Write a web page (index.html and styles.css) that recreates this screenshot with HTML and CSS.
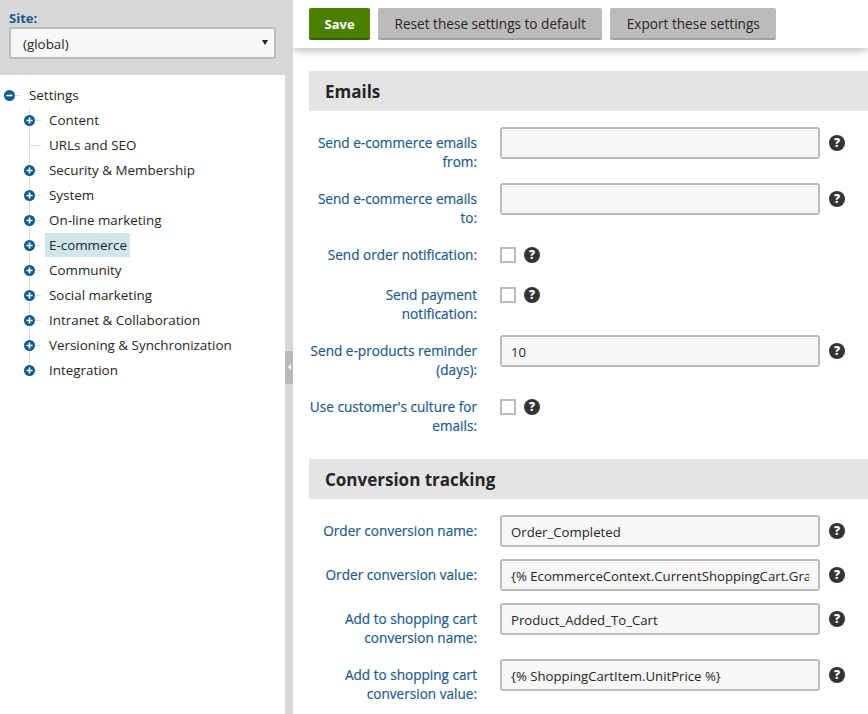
FILE: index.html
```html
<!DOCTYPE html>
<html lang="en">
<head>
<meta charset="UTF-8">
<meta name="viewport" content="width=device-width, initial-scale=1.0">
<title>Settings - E-commerce</title>
<link rel="stylesheet" href="styles.css">
</head>
<body>

<svg class="icon-defs" width="0" height="0">
    <symbol id="icon-plus" viewBox="0 0 11 11">
        <circle cx="5.5" cy="5.5" r="5.5" fill="#0f5c8e"/>
        <path d="M2.5 5.5h6M5.5 2.5v6" stroke="#fff" stroke-width="1.6"/>
    </symbol>
    <symbol id="icon-minus" viewBox="0 0 11 11">
        <circle cx="5.5" cy="5.5" r="5.5" fill="#0f5c8e"/>
        <path d="M2.5 5.5h6" stroke="#fff" stroke-width="1.6"/>
    </symbol>
</svg>

<div class="app">
    <aside class="sidebar">
        <div class="site-picker">
            <label class="site-label" for="siteSelect">Site:</label>
            <div class="select-wrap">
                <select id="siteSelect" class="site-select">
                    <option>(global)</option>
                </select>
            </div>
        </div>
        <div class="tree">
            <div class="tree-root">
                <svg class="node-icon"><use href="#icon-minus"/></svg>
                <span class="node-text">Settings</span>
            </div>
            <ul class="tree-list">
                <li><svg class="node-icon"><use href="#icon-plus"/></svg><span class="node-text">Content</span></li>
                <li class="leaf"><span class="node-text">URLs and SEO</span></li>
                <li><svg class="node-icon"><use href="#icon-plus"/></svg><span class="node-text">Security &amp; Membership</span></li>
                <li><svg class="node-icon"><use href="#icon-plus"/></svg><span class="node-text">System</span></li>
                <li><svg class="node-icon"><use href="#icon-plus"/></svg><span class="node-text">On-line marketing</span></li>
                <li><svg class="node-icon"><use href="#icon-plus"/></svg><span class="node-text selected">E-commerce</span></li>
                <li><svg class="node-icon"><use href="#icon-plus"/></svg><span class="node-text">Community</span></li>
                <li><svg class="node-icon"><use href="#icon-plus"/></svg><span class="node-text">Social marketing</span></li>
                <li><svg class="node-icon"><use href="#icon-plus"/></svg><span class="node-text">Intranet &amp; Collaboration</span></li>
                <li><svg class="node-icon"><use href="#icon-plus"/></svg><span class="node-text">Versioning &amp; Synchronization</span></li>
                <li><svg class="node-icon"><use href="#icon-plus"/></svg><span class="node-text">Integration</span></li>
            </ul>
        </div>
    </aside>

    <div class="splitter"><span class="splitter-handle"></span></div>

    <main class="content">
        <div class="toolbar">
            <button type="button" class="btn btn-primary">Save</button>
            <button type="button" class="btn">Reset these settings to default</button>
            <button type="button" class="btn">Export these settings</button>
        </div>

        <div class="settings">
            <h2 class="section-title">Emails</h2>
            <div class="section-body">
                <div class="form-row">
                    <label class="form-label">Send e-commerce emails from:</label>
                    <input type="text" class="form-input">
                    <span class="help">?</span>
                </div>
                <div class="form-row">
                    <label class="form-label">Send e-commerce emails to:</label>
                    <input type="text" class="form-input">
                    <span class="help">?</span>
                </div>
                <div class="form-row check-row">
                    <label class="form-label">Send order notification:</label>
                    <span class="check"></span>
                    <span class="help">?</span>
                </div>
                <div class="form-row check-row">
                    <label class="form-label">Send payment notification:</label>
                    <span class="check"></span>
                    <span class="help">?</span>
                </div>
                <div class="form-row">
                    <label class="form-label">Send e-products reminder (days):</label>
                    <input type="text" class="form-input" value="10">
                    <span class="help">?</span>
                </div>
                <div class="form-row check-row">
                    <label class="form-label">Use customer's culture for emails:</label>
                    <span class="check"></span>
                    <span class="help">?</span>
                </div>
            </div>

            <h2 class="section-title">Conversion tracking</h2>
            <div class="section-body">
                <div class="form-row">
                    <label class="form-label">Order conversion name:</label>
                    <input type="text" class="form-input" value="Order_Completed">
                    <span class="help">?</span>
                </div>
                <div class="form-row">
                    <label class="form-label">Order conversion value:</label>
                    <input type="text" class="form-input" value="{% EcommerceContext.CurrentShoppingCart.GrandTotal %}">
                    <span class="help">?</span>
                </div>
                <div class="form-row">
                    <label class="form-label">Add to shopping cart conversion name:</label>
                    <input type="text" class="form-input" value="Product_Added_To_Cart">
                    <span class="help">?</span>
                </div>
                <div class="form-row">
                    <label class="form-label">Add to shopping cart conversion value:</label>
                    <input type="text" class="form-input" value="{% ShoppingCartItem.UnitPrice %}">
                    <span class="help">?</span>
                </div>
            </div>
        </div>
    </main>
</div>

</body>
</html>
```

FILE: styles.css
```css
html, body {
    margin: 0;
    padding: 0;
    height: 100%;
    overflow: hidden;
}
body {
    font-family: "Open Sans", "Noto Sans", Arial, sans-serif;
    font-size: 13.4px;
    color: #262524;
    background-color: #fff;
}
.icon-defs {
    position: absolute;
}
.app {
    display: flex;
    height: 714px;
}

/* left column */
.sidebar {
    width: 285px;
    flex: none;
    display: flex;
    flex-direction: column;
}
.site-picker {
    height: 75px;
    box-sizing: border-box;
    padding: 9px 9px 0;
    background-color: #d6d8d6;
}
.site-label {
    display: block;
    height: 18px;
    line-height: 18px;
    font-size: 13px;
    font-weight: 700;
    color: #1c5a8a;
}
.select-wrap {
    position: relative;
    width: 267px;
}
.select-wrap::after {
    content: "";
    position: absolute;
    right: 8px;
    top: 13px;
    border-left: 3px solid transparent;
    border-right: 3px solid transparent;
    border-top: 5px solid #262524;
}
.site-select {
    appearance: none;
    display: block;
    width: 100%;
    height: 32px;
    padding: 2px 12px 0;
    font: inherit;
    color: #262524;
    background-color: #f7f7f7;
    border: 2px solid #bbb;
    border-radius: 3px;
}
.tree {
    flex: 1;
    padding-top: 8px;
    background-color: #fff;
}
.tree-root {
    position: relative;
    display: flex;
    align-items: center;
    height: 25px;
    padding-left: 29px;
}
.tree-root::before {
    content: "";
    position: absolute;
    left: 15px;
    top: 12px;
    width: 6px;
    border-top: 1px solid #ddd;
}
.tree-root .node-icon {
    left: 4px;
}
.tree-list {
    list-style-type: none;
    margin: 0;
    padding: 0;
}
.tree-list li {
    position: relative;
    display: flex;
    align-items: center;
    height: 25px;
    padding-left: 49px;
}
.tree-list li::before {
    content: "";
    position: absolute;
    left: 29px;
    top: 12px;
    width: 12px;
    border-top: 1px solid #ddd;
}
.tree-list li::after {
    content: "";
    position: absolute;
    left: 29px;
    top: 0;
    height: 25px;
    border-left: 1px solid #ddd;
}
.tree-list li:last-child::after {
    height: 12px;
}
.node-icon {
    position: absolute;
    z-index: 1;
    left: 24px;
    top: 7px;
    width: 11px;
    height: 11px;
}
.node-text {
    display: block;
    line-height: 25px;
}
.node-text.selected {
    align-self: flex-start;
    margin-left: -4px;
    padding: 0 3px 0 4px;
    background-color: #d0e5ec;
    height: 24px;
    line-height: 24px;
}

/* splitter between the columns */
.splitter {
    width: 8px;
    flex: none;
    background-color: #d6d8d6;
    position: relative;
}
.splitter-handle {
    position: absolute;
    left: 0;
    top: 351px;
    width: 8px;
    height: 33px;
    background-color: #b8b8b8;
}
.splitter-handle::after {
    content: "";
    position: absolute;
    left: 3px;
    top: 13px;
    border-top: 3px solid transparent;
    border-bottom: 3px solid transparent;
    border-right: 3px solid #fff;
}

/* right column */
.content {
    flex: 1;
    min-width: 0;
}
.toolbar {
    display: flex;
    gap: 8px;
    height: 48px;
    box-sizing: border-box;
    padding: 8px 16px 0;
    background-color: #fff;
    box-shadow: 0 3px 8px rgba(0, 0, 0, 0.25);
}
.btn {
    height: 32px;
    padding: 1px 16.5px 0;
    font: inherit;
    font-size: 13.6px;
    color: #262524;
    background-color: #bcbaba;
    border: none;
    border-bottom: 2px solid #a3a2a2;
    border-radius: 2px;
}
.btn-primary {
    padding: 1px 15.5px 0;
    font-size: 13px;
    font-weight: 700;
    color: #fff;
    background-color: #4a7f00;
    border-bottom-color: #356000;
}
.settings {
    padding: 23px 0 0 16px;
}
.section-title {
    margin: 0 0 16px;
    height: 40px;
    line-height: 41px;
    padding-left: 16px;
    font-size: 17px;
    font-weight: 700;
    color: #262524;
    background-color: #e4e4e4;
}
.section-body {
    padding-bottom: 12px;
}
.form-row {
    display: flex;
    align-items: flex-start;
    margin-bottom: 12px;
}
.check-row {
    min-height: 28px;
}
.form-label {
    width: 170px;
    flex: none;
    margin-left: -2px;
    padding-top: 6px;
    font-size: 13.6px;
    line-height: 19px;
    text-align: right;
    color: #1c5a8a;
    -webkit-text-stroke: 0.2px #1c5a8a;
}
.form-input {
    width: 320px;
    height: 32px;
    box-sizing: border-box;
    margin-left: 23px;
    padding: 2px 9px 0;
    font: inherit;
    font-size: 13.2px;
    color: #262524;
    background-color: #f7f7f7;
    border: 2px solid #bbb;
    border-radius: 3px;
}
.check {
    width: 16px;
    height: 16px;
    box-sizing: border-box;
    margin: 8px 0 0 23px;
    background-color: #fff;
    border: 2px solid #bbb;
}
.help {
    width: 16px;
    height: 16px;
    margin-top: 8px;
    margin-left: 8px;
    border-radius: 50%;
    background-color: #333;
    color: #fff;
    font-size: 12px;
    font-weight: 800;
    line-height: 16px;
    text-align: center;
}
.form-input + .help {
    margin-left: 9px;
}
```
